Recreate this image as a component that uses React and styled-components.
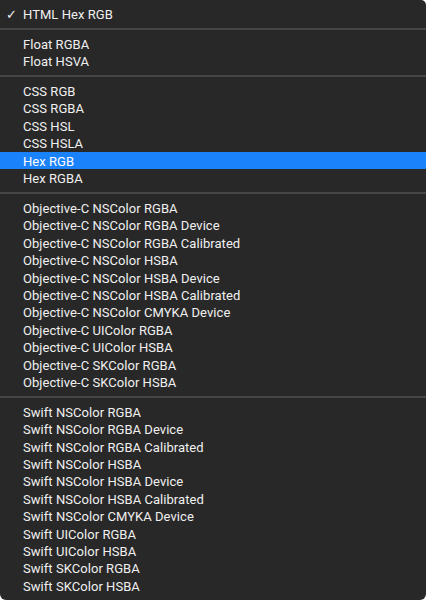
import React from "react";
import styled, { createGlobalStyle } from "styled-components";

const groups = [
  ["HTML Hex RGB"],
  ["Float RGBA", "Float HSVA"],
  ["CSS RGB", "CSS RGBA", "CSS HSL", "CSS HSLA", "Hex RGB", "Hex RGBA"],
  [
    "Objective-C NSColor RGBA",
    "Objective-C NSColor RGBA Device",
    "Objective-C NSColor RGBA Calibrated",
    "Objective-C NSColor HSBA",
    "Objective-C NSColor HSBA Device",
    "Objective-C NSColor HSBA Calibrated",
    "Objective-C NSColor CMYKA Device",
    "Objective-C UIColor RGBA",
    "Objective-C UIColor HSBA",
    "Objective-C SKColor RGBA",
    "Objective-C SKColor HSBA",
  ],
  [
    "Swift NSColor RGBA",
    "Swift NSColor RGBA Device",
    "Swift NSColor RGBA Calibrated",
    "Swift NSColor HSBA",
    "Swift NSColor HSBA Device",
    "Swift NSColor HSBA Calibrated",
    "Swift NSColor CMYKA Device",
    "Swift UIColor RGBA",
    "Swift UIColor HSBA",
    "Swift SKColor RGBA",
    "Swift SKColor HSBA",
  ],
];

const checked = "HTML Hex RGB";
const highlighted = "Hex RGB";

const App = () => {
  return (
    <>
      <GlobalStyle />
      <Menu>
        {groups.map((items, gi) => (
          <React.Fragment key={gi}>
            {gi > 0 && <Separator />}
            {items.map((label) => (
              <Item key={label} $active={label === highlighted}>
                <Check>{label === checked ? "✓" : ""}</Check>
                {label}
              </Item>
            ))}
          </React.Fragment>
        ))}
      </Menu>
    </>
  );
};

export default App;

const GlobalStyle = createGlobalStyle`
  html, body {
    margin: 0;
    padding: 0;
    background: #ffffff;
  }
  * {
    box-sizing: border-box;
  }
`;

const Menu = styled.div`
  width: 426px;
  height: 600px;
  padding: 5px 0;
  background: #282828;
  border-radius: 0 5px 6px 6px;
  display: flex;
  flex-direction: column;
  font-family: Roboto, "Liberation Sans", sans-serif;
  font-weight: 400;
  font-size: 13px;
  letter-spacing: 0.05px;
  color: #f0f0f0;
  overflow: hidden;
`;

const Item = styled.div`
  height: 17.4px;
  display: flex;
  align-items: center;
  padding: 1px 0 0 6px;
  white-space: nowrap;
  background: ${(p) => (p.$active ? "#1a82fb" : "transparent")};
  color: ${(p) => (p.$active ? "#ffffff" : "#f0f0f0")};
`;

const Check = styled.span`
  width: 17px;
  font-size: 13px;
  font-weight: bold;
  font-family: "DejaVu Sans", sans-serif;
`;

const Separator = styled.div`
  height: 12.6px;
  display: flex;
  align-items: center;
  &::before {
    content: "";
    flex: 1;
    height: 2px;
    background: #464646;
  }
`;
